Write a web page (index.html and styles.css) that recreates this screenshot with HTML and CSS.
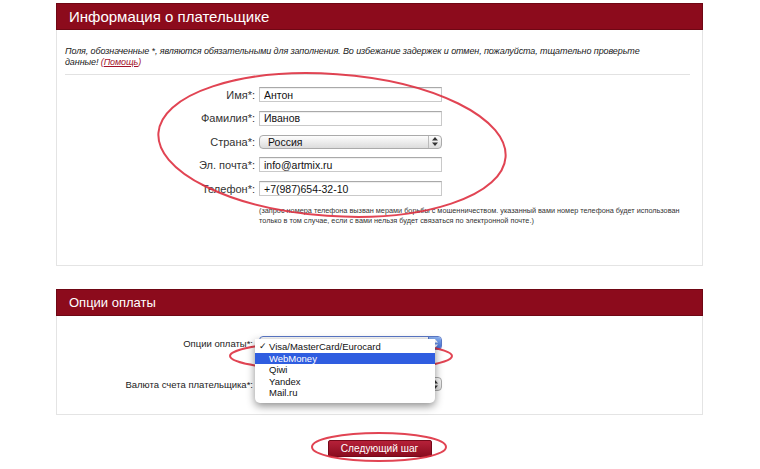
FILE: index.html
```html
<!DOCTYPE html>
<html lang="ru">
<head>
<meta charset="UTF-8">
<title>Информация о плательщике</title>
<link rel="stylesheet" href="styles.css">
</head>
<body>
<div class="page">

<!-- Payer info -->
<section class="panel payer">
<h2 class="panel-head">Информация о плательщике</h2>
<div class="panel-body">
<p class="intro">Поля, обозначенные *, являются обязательными для заполнения. Во избежание задержек и отмен, пожалуйста, тщательно проверьте данные! <a class="help" href="#">(<u>Помощь</u>)</a></p>
<hr class="sep">
<div class="form">
<div class="row"><label>Имя*:</label><input class="field" type="text" value="Антон"></div>
<div class="row"><label>Фамилия*:</label><input class="field" type="text" value="Иванов"></div>
<div class="row"><label>Страна*:</label>
 <div class="select"><span class="select-text">Россия</span><span class="arrows"><svg width="6" height="9" viewBox="0 0 6 9"><path d="M3 0L6 3.4H0z M3 9L6 5.6H0z" fill="#333"/></svg></span></div>
</div>
<div class="row"><label>Эл. почта*:</label><input class="field" type="text" value="info@artmix.ru"></div>
<div class="row"><label>Телефон*:</label><input class="field" type="text" value="+7(987)654-32-10"></div>
<p class="note">(запрос номера телефона вызван мерами борьбы с мошенничеством. указанный вами номер телефона будет использован только в том случае, если с вами нельзя будет связаться по электронной почте.)</p>
</div>
</div>
</section>

<!-- Payment options -->
<section class="panel pay">
<h2 class="panel-head">Опции оплаты</h2>
<div class="panel-body">
<div class="form">
<div class="row"><label>Опции оплаты*:</label>
 <div class="select active"><span class="select-text">Visa/MasterCard/Eurocard</span><span class="arrows"><svg width="6" height="9" viewBox="0 0 6 9"><path d="M3 0L6 3.4H0z M3 9L6 5.6H0z" fill="#fff"/></svg></span>
  <ul class="menu">
   <li class="checked">Visa/MasterCard/Eurocard</li>
   <li class="hl">WebMoney</li>
   <li>Qiwi</li>
   <li>Yandex</li>
   <li>Mail.ru</li>
  </ul>
 </div>
</div>
<div class="row"><label>Валюта счета плательщика*:</label>
 <div class="select"><span class="select-text">Российский рубль</span><span class="arrows"><svg width="6" height="9" viewBox="0 0 6 9"><path d="M3 0L6 3.4H0z M3 9L6 5.6H0z" fill="#333"/></svg></span></div>
</div>
</div>
</div>
</section>

<div class="actions"><button class="next">Следующий шаг</button></div>

<!-- red hand-drawn marks -->
<svg class="marks" width="760" height="469" viewBox="0 0 760 469">
 <ellipse cx="332" cy="145" rx="174" ry="71" transform="rotate(4 332 145)"/>
 <ellipse cx="341" cy="356" rx="111" ry="15"/>
 <ellipse cx="379" cy="447" rx="67" ry="14"/>
</svg>
</div>
</body>
</html>
```

FILE: styles.css
```css
body { margin:0; font-family:"Liberation Sans", Arial, sans-serif; color:#222; background:#fff; }
.page { position:relative; width:760px; height:469px; overflow:hidden; }

.panel { margin-left:56px; width:647px; border:1px solid #e4e4e4; border-top:none; box-sizing:border-box; }
.payer { margin-top:3px; height:263px; }
.pay { margin-top:23px; height:126px; }
.panel-head { margin:0 -1px; height:27px; background:#8c0b1c; border:1px solid #6f0714; color:#fff; font-size:15px; font-weight:normal; line-height:25px; padding-left:12px; box-sizing:border-box; }
.pay .panel-head { font-size:13px; }
.panel-body { padding:16px 12px 0 8px; }
.pay .panel-body { padding-top:20px; }

.intro { margin:0; font-size:9px; font-style:italic; line-height:11px; letter-spacing:-0.1px; color:#1a1a1a; padding-right:22px; }
.help { color:#a3122b; text-decoration:none; }
.sep { border:none; border-top:1px solid #e2e2e2; margin:6px 0 12px; }

.form { display:flex; flex-direction:column; gap:8.75px; }
.pay .form { gap:27px; }
.row { display:grid; grid-template-columns:190px 183px; column-gap:4px; align-items:center; }
.row label { text-align:right; font-size:11px; color:#333; }
.pay .row label { padding-right:2px; font-size:9.5px; color:#222; }

.field { height:15px; box-sizing:border-box; border:1px solid #c9c9c9; border-top-color:#a9a9a9; box-shadow:inset 0 1px 1px rgba(0,0,0,.07); font:10.5px "Liberation Sans", Arial, sans-serif; color:#111; padding:0 4px; margin:0; }

.select { position:relative; height:14px; box-sizing:border-box; border:1px solid #aaa; border-radius:4px; background:linear-gradient(#fdfdfd, #dcdcdc); display:flex; align-items:center; font-size:10.5px; }
.select-text { flex:1; padding-left:8px; color:#111; }
.arrows { width:12px; height:100%; display:flex; align-items:center; justify-content:center; border-left:1px solid #bbb; }
.active { border-color:#5a78c7; }
.active .arrows { background:linear-gradient(#8db2f0, #3b6ad8); border-left-color:#5a78c7; border-radius:0 3px 3px 0; }

.menu { position:absolute; left:-5px; top:2px; width:180px; margin:0; padding:2px 0 4px; list-style:none; background:#fff; border-radius:0 0 5px 5px; box-shadow:0 3px 8px rgba(0,0,0,.45); z-index:2; }
.menu li { height:11.6px; line-height:11.6px; padding-left:14px; font-size:9.5px; color:#111; }
.menu .checked { position:relative; }
.menu .checked::before { content:"✓"; position:absolute; left:4px; font-size:9px; }
.menu .hl { background:#2f5de0; color:#fff; }

.note { margin:0 0 0 194px; font-size:7.3px; line-height:10px; color:#333; padding-top:1px; }

.actions { margin-left:56px; width:647px; text-align:center; margin-top:23px; }
.next { width:104px; height:17px; padding:0; border:1px solid #75091a; border-radius:2px; background:linear-gradient(#b62139, #8b0c1f); color:#fff; font:10.2px "Liberation Sans", Arial, sans-serif; cursor:pointer; }

.marks { position:absolute; left:0; top:0; pointer-events:none; }
.marks ellipse { fill:none; stroke:#de3040; stroke-width:2; opacity:.9; }
```
